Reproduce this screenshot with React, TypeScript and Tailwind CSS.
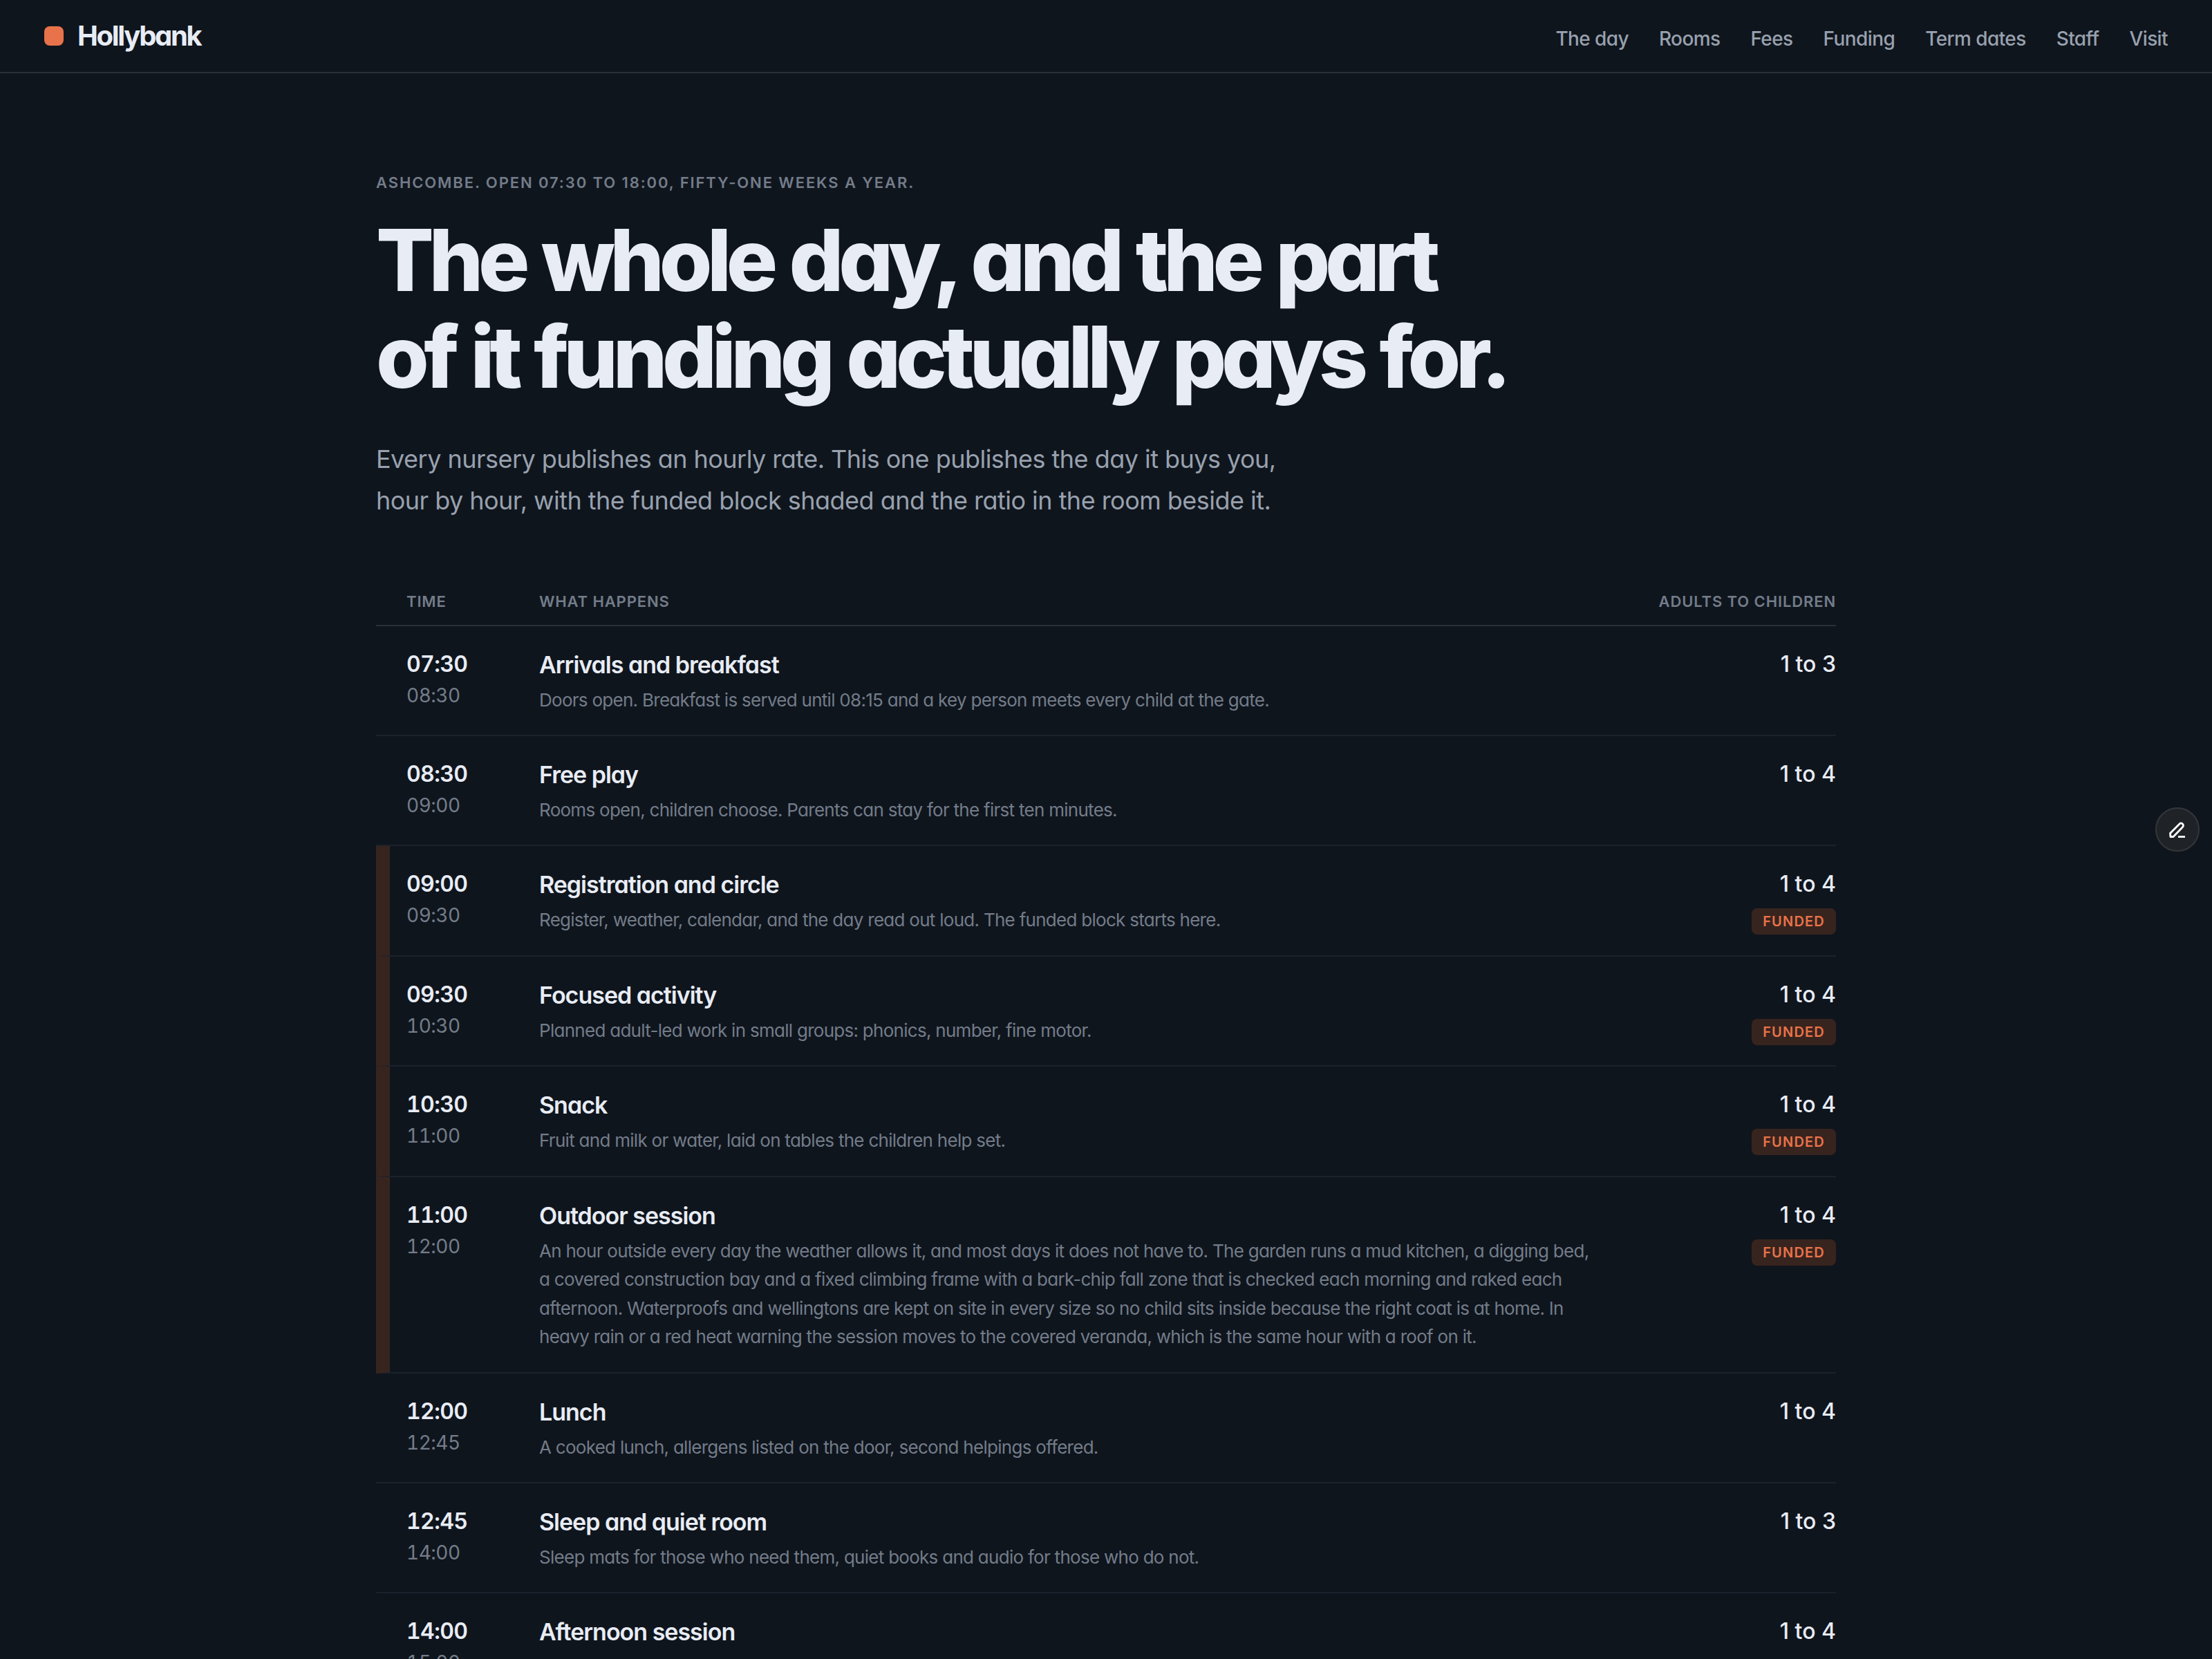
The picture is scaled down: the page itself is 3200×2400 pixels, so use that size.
import React from "react";

type Row = { a: string; b: string; t: string; d?: React.ReactNode; r: string; f?: boolean };

const rows: Row[] = [
  { a: "07:30", b: "08:30", t: "Arrivals and breakfast", d: "Doors open. Breakfast is served until 08:15 and a key person meets every child at the gate.", r: "1 to 3" },
  { a: "08:30", b: "09:00", t: "Free play", d: "Rooms open, children choose. Parents can stay for the first ten minutes.", r: "1 to 4" },
  { a: "09:00", b: "09:30", t: "Registration and circle", d: "Register, weather, calendar, and the day read out loud. The funded block starts here.", r: "1 to 4", f: true },
  { a: "09:30", b: "10:30", t: "Focused activity", d: "Planned adult-led work in small groups: phonics, number, fine motor.", r: "1 to 4", f: true },
  { a: "10:30", b: "11:00", t: "Snack", d: "Fruit and milk or water, laid on tables the children help set.", r: "1 to 4", f: true },
  { a: "11:00", b: "12:00", t: "Outdoor session", d: "An hour outside every day the weather allows it, and most days it does not have to. The garden runs a mud kitchen, a digging bed, a covered construction bay and a fixed climbing frame with a bark-chip fall zone that is checked each morning and raked each afternoon. Waterproofs and wellingtons are kept on site in every size so no child sits inside because the right coat is at home. In heavy rain or a red heat warning the session moves to the covered veranda, which is the same hour with a roof on it.", r: "1 to 4", f: true },
  { a: "12:00", b: "12:45", t: "Lunch", d: "A cooked lunch, allergens listed on the door, second helpings offered.", r: "1 to 4" },
  { a: "12:45", b: "14:00", t: "Sleep and quiet room", d: "Sleep mats for those who need them, quiet books and audio for those who do not.", r: "1 to 3" },
  { a: "14:00", b: "15:00", t: "Afternoon session", r: "1 to 4" },
];

const nav = ["The day", "Rooms", "Fees", "Funding", "Term dates", "Staff", "Visit"];

export default function App() {
  return (
    <div className="relative h-[2400px] overflow-hidden bg-[#0f151d] font-['Inter',sans-serif] [font-feature-settings:'cv11'] text-[#e8ecf4]">
      <header className="flex h-[106px] items-center justify-between border-b-2 border-[#2a3038] px-16">
        <div className="flex items-center gap-5">
          <span className="h-7 w-7 rounded-lg bg-[#e8734a]" />
          <span className="text-[40px] font-bold leading-none tracking-[-2.3px]">Hollybank</span>
        </div>
        <nav className="flex gap-11 pt-2 text-[28px] font-medium tracking-[-0.6px] text-[#98a1ae]">
          {nav.map((n) => (
            <span key={n}>{n}</span>
          ))}
        </nav>
      </header>

      <main className="mx-auto w-[2112px] pt-[142px]">
        <p className="text-[22px] font-semibold uppercase leading-8 tracking-[1.9px] text-[#737c89]">
          Ashcombe. Open 07:30 to 18:00, fifty-one weeks a year.
        </p>
        <h1 className="mt-[26px] text-[124px] font-extrabold leading-[140px] tracking-[-7.4px] [word-spacing:4px] text-[#e8ecf4]">
          The whole day, and the part
          <br />
          of it funding actually pays for.
        </h1>
        <p className="mt-[48px] text-[36px] leading-[60px] tracking-[-0.53px] text-[#98a1ae]">
          Every nursery publishes an hourly rate. This one publishes the day it buys you,
          <br />
          hour by hour, with the funded block shaded and the ratio in the room beside it.
        </p>

        <div className="mt-[100px] flex h-[52px] items-start border-b-2 border-[#2a3038] pl-11 text-[22px] font-semibold uppercase leading-8 tracking-[0.04em] text-[#737c89]">
          <span className="w-[192px]">Time</span>
          <span className="flex-1">What happens</span>
          <span>Adults to children</span>
        </div>

        {rows.map((r) => (
          <div key={r.a} className={`flex border-b-2 border-[#1c222b] pb-[29.5px] pt-[32px] ${r.f ? "border-l-[20px] border-l-[#38241e] pl-6" : "pl-11"}`}>
            <div className="w-[192px] shrink-0 tabular-nums">
              <div className="text-[32px] font-semibold leading-[46px] tracking-[-0.6px]">{r.a}</div>
              <div className="text-[28px] leading-[44px] tracking-[-0.5px] text-[#737c89]">{r.b}</div>
            </div>
            <div className="w-[1530px] shrink-0">
              <div className="text-[34px] font-semibold leading-[48px] tracking-[-1px]">{r.t}</div>
              {r.d && <div className="mt-[6px] text-[26px] leading-[41.6px] tracking-[-0.72px] text-[#737c89]">{r.d}</div>}
            </div>
            <div className="flex flex-1 flex-col items-end">
              <div className="text-[32px] font-medium leading-[46px]">{r.r}</div>
              {r.f && (
                <span className="mt-3 rounded-lg bg-[#38241e] px-4 py-1.5 text-[20px] font-semibold uppercase leading-[26px] tracking-[0.06em] text-[#e8734a]">
                  Funded
                </span>
              )}
            </div>
          </div>
        ))}
      </main>

      <button className="absolute left-[3118px] top-[1168px] flex h-16 w-16 items-center justify-center rounded-full border-2 border-[#33373c] bg-[#1f2226] text-white">
        <svg width="26" height="26" viewBox="0 0 26 26" fill="none" stroke="currentColor" strokeWidth="2.8" strokeLinecap="butt" strokeLinejoin="round">
          <path d="M3 23.5H7L20.5 9.5a3.2 3.2 0 0 0-4.6-4.6L2.5 18.5Z" />
          <path d="M14 23.5H24" />
        </svg>
      </button>
    </div>
  );
}
